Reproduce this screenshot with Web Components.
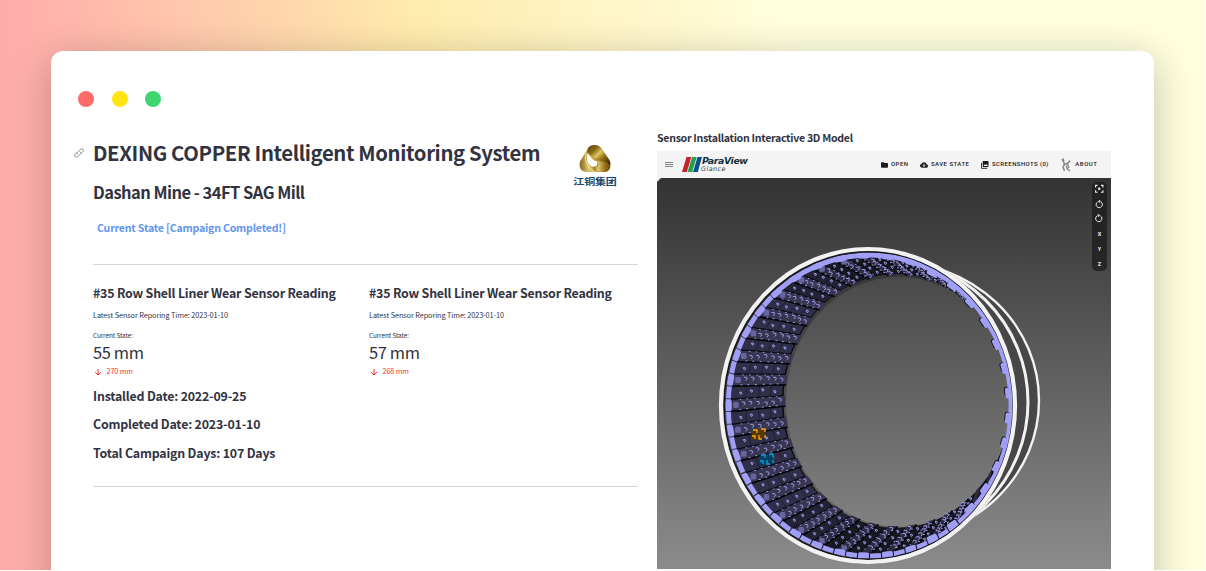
<!DOCTYPE html>
<html lang="en">
<head>
<meta charset="utf-8">
<title>DEXING COPPER Intelligent Monitoring System</title>
<style>
html, body { margin: 0; height: 571px; overflow: hidden; background: #fff; }
body { font-family: "Noto Sans CJK SC", "Open Sans", sans-serif; color: #31333f; }
</style>
</head>
<body>
<monitor-app></monitor-app>
<script>
const define = (name, html, setup) => {
  const t = document.createElement('template');
  t.innerHTML = html;
  customElements.define(name, class extends HTMLElement {
    connectedCallback() {
      if (this.shadowRoot) return;
      this.attachShadow({ mode: 'open' }).append(t.content.cloneNode(true));
      if (setup) setup(this, this.shadowRoot);
    }
  });
};

/* One line of text, tracked so that it spans the given width. */
define('fit-text', `<style>
:host { display: flex; align-items: center; white-space: pre; flex: none; }
span { display: block; line-height: 1; }
</style><span><slot></slot></span>`, (host, root) => {
  const s = root.querySelector('span');
  const n = host.textContent.length;
  const w = s.getBoundingClientRect().width;
  s.style.letterSpacing = ((+host.getAttribute('width') - w) / (n - 1)) + 'px';
});

define('window-dots', `<style>
:host { display: flex; gap: 17.5px; }
i { width: 16px; height: 16px; border-radius: 50%; }
</style><i style="background:#ff6b6b"></i><i style="background:#ffe313"></i><i style="background:#3dd56d"></i>`);

define('company-logo', `<style>
:host { display: flex; flex-direction: column; align-items: center; width: 46px; }
svg { display: block; }
fit-text { font-size: 11px; font-weight: 700; color: #17476b; height: 10px; margin-top: 3px; transform: scaleY(.8); }
</style>
<svg width="32" height="28" viewBox="0 1 32 27" preserveAspectRatio="none">
<defs><linearGradient id="a" x1="0" y1="0" x2="1" y2=".9"><stop offset="0" stop-color="#5a3e08"/><stop offset=".3" stop-color="#8c6a16"/><stop offset=".5" stop-color="#e0c765"/><stop offset=".65" stop-color="#a37c1e"/><stop offset="1" stop-color="#3c2703"/></linearGradient>
<linearGradient id="b" x1="0" y1="0" x2="1" y2="0"><stop offset="0" stop-color="#87651a"/><stop offset=".3" stop-color="#dfc970"/><stop offset=".65" stop-color="#a27a1d"/><stop offset="1" stop-color="#6b4a0a"/></linearGradient></defs>
<path d="M9 4C12 0 19 0 22 4L30 15C33 21 31 26 27 27L8 27C1 27 0 22 1 17Z" fill="url(#b)"/>
<path d="M9 4C12 0 19 0 22 4L30 15Q32 18 31 20C25 14 13 15 8 8Z" fill="url(#a)"/>
<path d="M9 9C7 14 8 20 14 22C18 22 19 20 18 17C14 16 11 13 9 9Z" fill="#fff"/>
<path d="M7 9C5 17 9 25 17 27" fill="none" stroke="#fff5bd" stroke-width=".8"/>
<path d="M14 22C20 24 21 18 17 15C21 18 27 17 31 20Q30 27 24 27L15 26Z" fill="url(#b)"/>
</svg><fit-text width="43.5">江铜集团</fit-text>`);

define('sensor-metric', `<style>
:host { display: block; width: 276px; flex: none; }
.h { height: 25px; font-size: 12.4px; font-weight: 700; }
.t { height: 20px; font-size: 7.3px; }
.c { height: 20px; font-size: 6.4px; }
.v { height: 12px; padding-bottom: 2px; font-size: 16.5px; }
.d { display: flex; align-items: center; height: 24px; color: #ff2b2b; font-size: 7.2px; }
svg { width: 8px; height: 8px; margin: 0 4.5px 0 1px; }
</style>
<fit-text class="h" width="243">#35 Row Shell Liner Wear Sensor Reading</fit-text>
<fit-text class="t" width="135">Latest Sensor Reporing Time: 2023-01-10</fit-text>
<fit-text class="c" width="40">Current State:</fit-text>
<fit-text class="v" width="51"></fit-text>
<div class="d"><svg viewBox="0 0 8 8"><path d="M4 1V7M1.2 4.2L4 7L6.8 4.2" fill="none" stroke="#ff2b2b"/></svg><fit-text class="x" width="26.5"></fit-text></div>`,
(host, root) => {
  for (const [sel, a] of [['.v', 'value'], ['.x', 'delta']]) {
    const el = document.createElement('fit-text');
    const old = root.querySelector(sel);
    el.className = old.className;
    el.setAttribute('width', old.getAttribute('width'));
    el.textContent = host.getAttribute(a);
    old.replaceWith(el);
  }
});

define('summary-panel', `<style>
:host { display: block; width: 545px; padding-top: 138px; flex: none; }
header { display: flex; justify-content: space-between; height: 126px; }
.title { position: relative; height: 29px; font-size: 20.3px; font-weight: 700; }
.link { position: absolute; left: -19px; top: 10px; }
.sub { height: 49px; padding-top: 1px; font-size: 16.5px; font-weight: 600; }
.state { height: 23px; margin-left: 4px; font-size: 10.6px; font-weight: 700; color: #6495ed; }
company-logo { margin: 7px 20px 0 0; }
hr { border: 0; height: 1px; margin: 0; background: #d6d6d9; }
.cols { display: flex; padding-top: 16px; }
.row { height: 25px; font-size: 12.4px; font-weight: 700; }
.mid { height: 30px; padding-bottom: 2px; }
.last { margin-bottom: 20px; }
</style>
<header><div>
<div class="title"><svg class="link" width="10" height="10" viewBox="0 0 10 10" fill="none" stroke="#858690" stroke-width=".9"><path d="M3.8 6.500C2.700 5.500 3.200 4.300 4.300 3.500L6.300 1.600C7.400.500 9.900.600 9.400 2.800C9.100 3.900 7.800 5 7 5.600M5.900 3.600C7.200 4.700 6.800 5.700 5.700 6.700L3.700 8.500C2.500 9.600.200 9.200.7 7.100C1 6 2 5.100 2.900 4.500"/></svg><fit-text style="height:29px" width="447.5">DEXING COPPER Intelligent Monitoring System</fit-text></div>
<fit-text class="sub" width="212">Dashan Mine - 34FT SAG Mill</fit-text>
<fit-text class="state" width="189">Current State [Campaign Completed!]</fit-text>
</div><company-logo></company-logo></header>
<hr>
<div class="cols"><sensor-metric value="55 mm" delta="270 mm"></sensor-metric><sensor-metric value="57 mm" delta="268 mm"></sensor-metric></div>
<fit-text class="row" width="153.500">Installed Date: 2022-09-25</fit-text>
<fit-text class="row mid" width="167.500">Completed Date: 2023-01-10</fit-text>
<fit-text class="row last" width="182.500">Total Campaign Days: 107 Days</fit-text>
<hr>`);

define('glance-toolbar', `<style>
:host { display: flex; align-items: center; height: 27px; background: #f4f4f4; font-family: Roboto, sans-serif; font-size: 6px; font-weight: 500; color: #1a1a1a; }
svg { display: block; flex: none; }
.menu { margin: 0 10px 0 8px; }
.brand { width: 178.5px; }
.p { font: italic 700 9.4px "DejaVu Sans", sans-serif; height: 9px; margin-bottom: 1px; color: #143038; }
.g { font: italic 400 6.4px "DejaVu Sans", sans-serif; height: 7px; margin-left: -1px; color: #333; }
.i { margin-right: 3px; }
.m { margin-top: -1px; }
</style>
<svg class="menu" width="8" height="7"><path d="M0 1.5H8M0 3.5H8M0 5.5H8" stroke="#777" stroke-width=".9"/></svg>
<svg width="20" height="17" viewBox="0 0 20 17" style="margin-left:-1px"><path d="M4.5 1H9.300L4.800 16H0Z" fill="#c4232e"/><path d="M10 1H14.700L10.200 16H5.500Z" fill="#24a148"/><path d="M15.500 1H20L15.800 16H11Z" fill="#0b4f91"/></svg>
<div class="brand"><fit-text class="p" width="46">ParaView</fit-text><fit-text class="g" width="24.5">Glance</fit-text></div>
<svg class="i" style="margin-right:3.5px" width="7" height="6"><path d="M0 1Q0 .3.8.3H2.7L3.4 1H6.2Q7 1 7 1.8V5Q7 5.7 6.2 5.7H.8Q0 5.7 0 5Z" fill="#1b1b1b"/></svg>
<fit-text class="m" width="17" style="margin-right:11.5px">OPEN</fit-text>
<svg class="i" width="8" height="6"><path d="M2 5.7Q0 5.5 0 3.8Q0 2.3 1.4 2.1Q2.2.2 4 .2Q6 .2 6.5 2.2Q8 2.3 8 4Q8 5.5 6.4 5.7Z" fill="#1b1b1b"/><path d="M4 1.8V4.2M2.8 3.5L4 4.7L5.2 3.5" fill="none" stroke="#f4f4f4" stroke-width=".9"/></svg>
<fit-text class="m" width="38" style="margin-right:11.5px">SAVE STATE</fit-text>
<svg class="i" width="8" height="8"><path d="M2 0H7Q7.5 0 7.5.7V5.2Q7.5 6 6.8 6H2.4Q1.7 6 1.7 5.2V.6Z" fill="#1b1b1b"/><path d="M.4 1.8V7.3H6.2" fill="none" stroke="#1b1b1b" stroke-width=".9"/><path d="M2.5 5L3.8 3.3L4.7 4.2L5.6 3L7 5Z" fill="#f4f4f4"/></svg>
<fit-text class="m" width="56.5" style="margin-right:12.5px">SCREENSHOTS (0)</fit-text>
<svg class="i" style="margin-right:3px" width="11" height="14" viewBox="0 0 11 14" fill="none" stroke="#888"><path d="M1 1L3.500 6L2 9L3.500 13M4 6L7 5L9 2.500M2 .5L3 3M4 6L7 7L8 10M5 8L6.5 11L9 13" stroke-width="1.5"/><path d="M3 4L6 7L5 9L8 8" stroke="#aaa"/></svg>
<fit-text class="m" width="21.5">ABOUT</fit-text>`);

define('view-tools', `<style>
:host { display: flex; flex-direction: column; align-items: center; width: 15px; height: 89px; border-radius: 5px; background: rgba(26,26,26,.72); color: #ddd; font: 700 5.5px/16px Roboto, sans-serif; }
svg, b { display: block; width: 15px; height: 15px; text-align: center; fill: none; stroke: #eee; }
</style>
<svg viewBox="0.5 0.5 15 15"><path d="M4 6V4H6M9.500 4H11.500V6M11.500 9V11H9.500M6 11H4V9" stroke-width="1.2"/><circle cx="7.700" cy="7.500" r="1.300" fill="#eee" stroke="none"/></svg>
<svg viewBox="0.5 0 15 15"><path d="M6 5A3.200 3.200 0 1 0 9.500 5M6.800 4.700L8.500 3.500V5.500Z"/></svg>
<svg viewBox="0.5 0 15 15"><path d="M9 5A3.200 3.200 0 1 1 5.500 5M8.200 4.700L6.500 3.500V5.500Z"/></svg>
<b>X</b><b>Y</b><b>Z</b>`);

/* Mill shell: liners are laid out as rows between the near and far rims. */
define('mill-model', `<style>:host, svg { display: block; }</style>
<svg width="454" height="391" viewBox="657 178 454 391">
<defs>
<linearGradient id="bg" x1="0" y1="0" x2="0" y2="1"><stop offset="0" stop-color="#333"/><stop offset="1" stop-color="#8b8b8b"/></linearGradient>
<clipPath id="out"><path clip-rule="evenodd" d="M657 178H1111V569H657ZM719 405.500A149 158.500 0 0 0 1017 405.500A149 158.500 0 0 0 719 405.500Z"/></clipPath>
<clipPath id="in"><ellipse cx="869" cy="405.500" rx="144.500" ry="153.500"/></clipPath>
</defs>
<rect x="657" y="178" width="454" height="391" fill="url(#bg)"/>
<path d="M657 178H661L657 182Z" fill="#eee"/>
<g clip-path="url(#out)" fill="none" stroke="#f2f2f2">
<ellipse cx="892" cy="400.500" rx="147" ry="139" fill="#474747" stroke-width="2.400"/>
<ellipse cx="883" cy="402" rx="145" ry="144" stroke-width="3"/>
</g>
<path fill="#000" fill-opacity=".22" fill-rule="evenodd" d="M723 405.500A145 154 0 0 0 1013 405.500A145 154 0 0 0 723 405.500ZM786 402A113 125 0 0 0 1012 402A113 125 0 0 0 786 402Z"/>
<g id="rows" clip-path="url(#in)"></g>
<ellipse cx="868.600" cy="405.500" rx="144.600" ry="153.800" fill="none" stroke="#16161c" stroke-width="1.500"/>
<ellipse cx="868" cy="405.500" rx="147" ry="156.500" fill="none" stroke="#f2f2f2" stroke-width="4.200"/>
</svg>`, (host, root) => {
  const N = 74, rad = Math.PI * 2 / N;
  let seed = 7;
  const rnd = () => (seed = (seed * 16807) % 2147483647) / 2147483647;
  const P = (a, k) => {
    const c = Math.cos(a), s = Math.sin(a);
    const o = [869.5 + 141 * c, 405.5 + 150 * s], i = [896 + 114 * c, 401 + 127 * s];
    return [o[0] + (i[0] - o[0]) * k, o[1] + (i[1] - o[1]) * k];
  };
  const f = p => p[0].toFixed(1) + ' ' + p[1].toFixed(1);
  const poly = (pts, fill) => `<path d="M${pts.map(f).join('L')}Z" fill="${fill}"/>`;
  let h = '<path fill="#0a0a11" fill-rule="evenodd" d="M725.500 405.500A144 153 0 0 0 1013.500 405.500A144 153 0 0 0 725.500 405.500ZM783.500 401A112.500 126 0 0 0 1010.500 401A112.500 126 0 0 0 783.500 401Z"/>';
  for (let n = 0; n < N; n++) {
    const a = n * rad, lift = n % 2, c = Math.cos(a), s = Math.sin(a);
    const w = lift ? .44 : .48, end = lift ? 1.06 : 1;
    const flat = Math.max(0, -c);
    const fill = lift ? (flat > .5 ? '#383650' : '#2c2b3f') : (flat > .6 ? '#302f49' : flat > .3 ? '#242336' : '#181822');
    if (c < .85) h += poly([P(a - rad * w, 0), P(a - rad * w, end), P(a + rad * w, end), P(a + rad * w, 0)], fill);
    if (c < .72) {
      h += `<path d="M${f(P(a - rad * .5, 0))}L${f(P(a - rad * .5, end))}" stroke="#050509" stroke-width="${lift ? 1.6 : .5}"/>`;
      if (!lift) for (const k of [.32, .56, .78]) h += `<path d="M${f(P(a - rad * .45, k))}L${f(P(a + rad * .45, k))}" stroke="#171722" stroke-width=".6"/>`;
      const ks = lift ? [.28, .41, .55, .7, .83, .96] : [.22, .42, .63, .86];
      for (const k of ks) {
        const q = P(a + rad * (rnd() - .5) * .25, k);
        const x = q[0], y = q[1], m = lift ? 1.6 : 1.15;
        h += `<path d="M${f([x - m, y - m])}L${f([x + m * .6, y - m])}L${f([x + m, y + m * .2])}L${f([x, y + m])}${lift ? '' : 'Z'}" fill="none" stroke="#a3a0f0" stroke-width=".95"/>`;
        if (lift) {
          for (const e of [-.4, .43]) {
            const r = P(a + rad * e, k - .06);
            h += `<path d="M${f([r[0] - 1, r[1]])}h1.900" stroke="#9a98e6" stroke-width="1"/>`;
          }
        }
      }
      if (lift && flat > .2) {
        const q = P(a, .14);
        h += `<rect x="${(q[0] - 2.8).toFixed(1)}" y="${(q[1] - 3).toFixed(1)}" width="5.600" height="6" rx="1.500" fill="#6765a0"/>`;
      }
    }
  }
  /* lilac end faces on the near rim */
  h += '<ellipse cx="869.700" cy="405.500" rx="141.500" ry="150.500" fill="none" stroke="#a19ef5" stroke-width="5"/>';
  for (let n = 0; n < N; n++) {
    const a = n * rad, lift = n % 2, c = Math.cos(a), s = Math.sin(a);
    const x = 869.5 + 140.8 * c, y = 405.5 + 150 * s, d = Math.atan2(s * 150, c * 141) * 180 / Math.PI;
    const tf = `transform="translate(${x.toFixed(1)} ${y.toFixed(1)}) rotate(${d.toFixed(1)})"`;
    if (lift) {
      const right = c > .4;
      if (right) h += `<rect x="-5.400" y="-6.300" width="5" height="10" rx="2.500" fill="#0c0c14" ${tf}/>`;
      h += `<rect x="${right ? -4.6 : -3}" y="-5.500" width="${right ? 8 : 6}" height="11" rx="2" fill="#a19ef5" ${tf}/>`;
    }
    if (c < .6 && (s > 0 || c < -.6)) h += `<path d="M-4 -6H3" stroke="#1c1c2a" stroke-width="${s > .4 ? 1.1 : .7}" ${tf}/>`;
  }
  const tile = (x, y, dark, light) => `<path d="M${x} ${y + 3}L${x + 14} ${y}L${x + 15} ${y + 9}L${x + 1} ${y + 12}Z" fill="${dark}"/><path d="M${x + 2} ${y + 2}h4v3m4-4h4v3M${x + 1} ${y + 8}h3v3m4-4v4h3m3-4v3" fill="none" stroke="${light}" stroke-width="1.300"/>`;
  h += tile(751, 428, '#573800', '#ffa60a') + tile(759, 453, '#004360', '#0aa5e8');
  root.getElementById('rows').innerHTML = h;
});

define('model-panel', `<style>
:host { display: block; width: 454px; padding-top: 127px; flex: none; }
.h { height: 22px; padding-bottom: 2px; font-size: 10.6px; font-weight: 700; }
.view { position: relative; }
view-tools { position: absolute; right: 4px; top: 4px; }
</style>
<fit-text class="h" width="196">Sensor Installation Interactive 3D Model</fit-text>
<glance-toolbar></glance-toolbar>
<div class="view"><mill-model></mill-model><view-tools></view-tools></div>`);

define('monitor-app', `<style>
:host { display: block; width: 1205px; height: 570px; overflow: hidden; background: linear-gradient(90deg, #ffabab, #ffebad 34%, #ffffdf 66%, #ffffdf); }
main { position: relative; box-sizing: border-box; width: 1103px; height: 700px; margin-left: 51px; border-radius: 12px; background: #fff; box-shadow: 0 8px 40px rgba(0,0,0,.25); display: flex; padding-left: 42px; gap: 19px; }
.wrap { padding-top: 51px; }
window-dots { position: absolute; left: 27px; top: 40px; }
summary-panel, model-panel { margin-top: -51px; }
</style>
<div class="wrap"><main><window-dots></window-dots><summary-panel></summary-panel><model-panel></model-panel></main></div>`);
</script>
</body>
</html>
